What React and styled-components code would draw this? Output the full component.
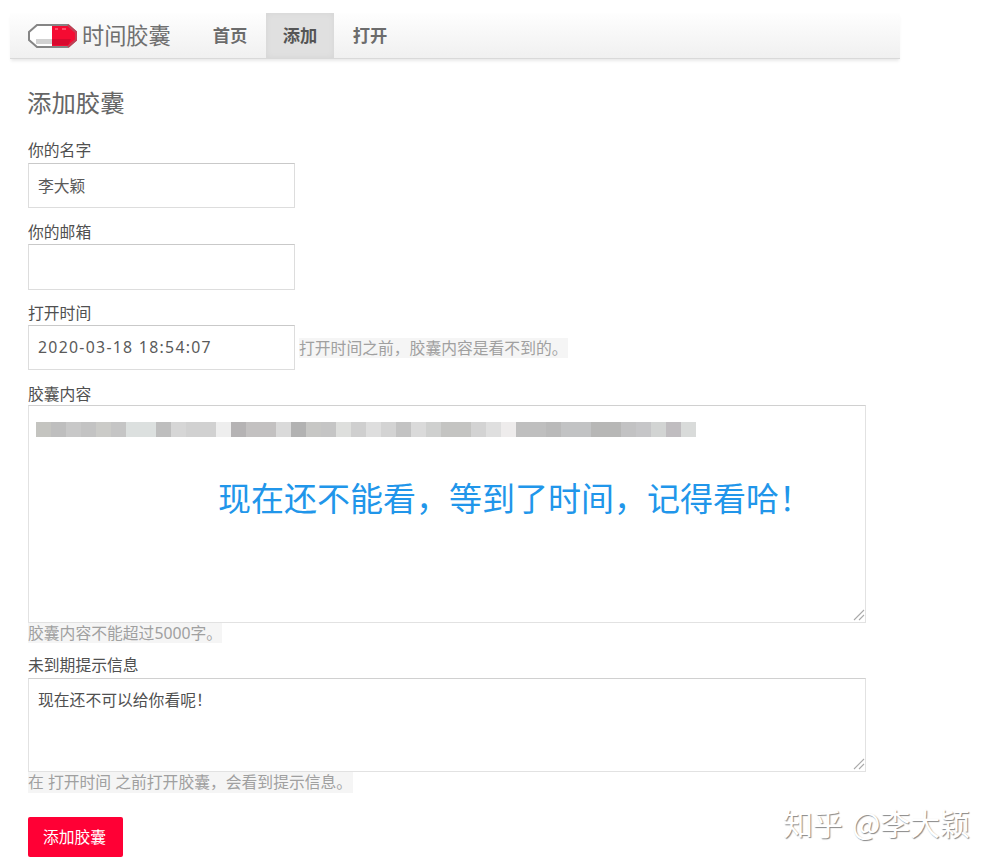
import React from "react";
import styled, { createGlobalStyle } from "styled-components";

const GlobalStyle = createGlobalStyle`
  * { box-sizing: border-box; }
  body {
    margin: 0;
    background: #fff;
    color: #555;
    font: 15.8px/20px "Noto Sans", "Noto Sans CJK SC", sans-serif;
  }
`;

const Page = styled.div`
  position: relative;
  width: 995px;
  height: 865px;
  padding: 13px 0 0 10px;
  overflow: hidden;
`;

const Navbar = styled.header`
  display: flex;
  width: 890px;
  height: 46px;
  padding-left: 17px;
  background: linear-gradient(#fefefe, #f0f0f0);
  border-bottom: 1px solid #d9d9d9;
  box-shadow: 0 3px 3px -1px rgba(0, 0, 0, 0.09);
`;

const Brand = styled.a`
  display: flex;
  align-items: center;
  gap: 4px;
  width: 167px;
  color: #707070;
  font: 22.2px/43px "Noto Sans CJK SC", sans-serif;
  white-space: nowrap;
`;

const BrandName = styled.span`
  margin: -2px 0 0 1px;
`;

const Capsule = styled.svg`
  flex: none;
  width: 50px;
  height: 26px;
  margin-top: 1px;
`;

const NavItem = styled.a`
  width: ${(p) => p.$width}px;
  height: 45px;
  color: ${(p) => (p.$active ? "#555" : "#6c6c6c")};
  background: ${(p) => (p.$active ? "#e0e0e0" : "transparent")};
  box-shadow: ${(p) => (p.$active ? "inset 0 0 6px rgba(0,0,0,.05)" : "none")};
  font: bold 17.3px/43px "Noto Sans CJK SC", sans-serif;
  text-align: center;
`;

const Form = styled.form`
  display: flex;
  flex-direction: column;
  align-items: flex-start;
  width: 838px;
  margin: 27px 0 0 18px;
`;

const Title = styled.h1`
  margin: 0 0 22px -1px;
  color: #666;
  font: 24.4px/32px "Noto Sans CJK SC", sans-serif;
`;

const Field = styled.div`
  height: ${(p) => p.$height}px;
  width: 100%;
`;

const Label = styled.label`
  display: block;
  height: ${(p) => p.$height || 22}px;
  color: #505050;
  line-height: 20px;
`;

const InputRow = styled.div`
  display: flex;
  align-items: center;
  gap: 4px;
`;

const Input = styled.input`
  width: 267px;
  height: ${(p) => p.$height || 46}px;
  padding: 0 9px 1px;
  border: 1px solid #ddd;
  border-top-color: #c9c9c9;
  outline: 0;
  color: #5a5a5a;
  font: inherit;
  letter-spacing: ${(p) => p.$tracking || "0"};
`;

const Hint = styled.span`
  display: block;
  width: ${(p) => p.$width}px;
  height: ${(p) => p.$height || 20}px;
  background: #f5f5f5;
  color: #a0a0a0;
  line-height: ${(p) => p.$height || 20}px;
  white-space: nowrap;
`;

const TextBox = styled.div`
  position: relative;
  width: 838px;
  height: ${(p) => p.$height}px;
  border: 1px solid #e2e2e2;
  border-top-color: #d0d0d0;
  padding: ${(p) => p.$padding};
  color: #505050;
`;

const Grip = styled.svg`
  position: absolute;
  right: 0;
  bottom: 1px;
  width: 12px;
  height: 12px;
  stroke: #aaa;
  stroke-width: 1.1;
`;

const Mosaic = styled.div`
  display: flex;
  height: 15px;
`;

const Tile = styled.i`
  width: 15px;
  background: ${(p) => p.$color};
`;

const Notice = styled.p`
  margin: 36px 0 0 182px;
  color: #2196ea;
  font: 33px/48px "Noto Sans CJK SC", sans-serif;
  white-space: nowrap;
`;

const Submit = styled.button`
  width: 95px;
  height: 40px;
  padding: 0 2px 0 0;
  border: 0;
  border-radius: 2px;
  background: #ff0035;
  color: #fff;
  font: 15.8px/40px "Noto Sans CJK SC", sans-serif;
`;

const Watermark = styled.div`
  position: absolute;
  left: 783px;
  top: 801px;
  color: #fff;
  font: 30px/42px "Noto Sans CJK SC", sans-serif;
  word-spacing: 3px;
  letter-spacing: -0.2px;
  text-shadow: 1px 1px 1px #888;
  white-space: nowrap;
`;

const tiles = (
  "c4c4c0 bebebe c8c8c8 c3c3c3 cbcbc8 c5c5c5 dce0df dce0df bebebe d6d6d6 d1d1d1 " +
  "d1d1d1 eeeeee b5b3b4 c3c1c1 c3c1c1 dadada b2b2b2 c7c7c5 c5c5c5 dedfdd cfcfcf " +
  "dedede d3d3d3 c3c3c3 dadada cfd0cf c4c4c2 c4c4c2 d3d3d3 dfdfdf eeecec bfbfbf " +
  "bfbfbf bababa c2c3c4 c2c3c4 b7b7b6 b7b7b6 c2c2c3 c6c6c8 d2d4d3 c0bdc0 d9dbda"
).split(" ");

const ResizeGrip = () => (
  <Grip viewBox="0 0 12 12">
    <path d="M1 11 11 1M6 11l5-5" />
  </Grip>
);

export default function App() {
  return (
    <>
      <GlobalStyle />
      <Page>
        <Navbar>
          <Brand>
            <Capsule viewBox="0 0 50 26">
              <path d="M10 2h31l8 7v8l-8 7H10l-8-7V9z" fill="#fff" />
              <path d="M25 2h16l8 7v8l-8 7H25z" fill="#f50b32" />
              <path d="M9 16h16v5H9z" fill="#d1d1d1" />
              <path d="M25 16h19l-3 6H25z" fill="#d8092e" />
              <path d="M28 6h3m4 0h4" stroke="#ff6880" strokeWidth="1.5" />
              <path d="M10 2h31l8 7v8l-8 7H10l-8-7V9z" fill="none" stroke="#858585" strokeWidth="2" />
              <path d="M41 2l8 7v8l-8 7" fill="none" stroke="#c43c52" strokeWidth="2" />
            </Capsule>
            <BrandName>时间胶囊</BrandName>
          </Brand>
          <NavItem $width={72}>首页</NavItem>
          <NavItem $width={68} $active>添加</NavItem>
          <NavItem $width={72}>打开</NavItem>
        </Navbar>
        <Form>
          <Title>添加胶囊</Title>
          <Field $height={82}>
            <Label $height={23}>你的名字</Label>
            <Input $height={45} defaultValue="李大颖" />
          </Field>
          <Field $height={81}>
            <Label>你的邮箱</Label>
            <Input />
          </Field>
          <Field $height={81}>
            <Label>打开时间</Label>
            <InputRow>
              <Input $height={45} defaultValue="2020-03-18 18:54:07" $tracking="1.3px" />
              <Hint $width={269}>打开时间之前，胶囊内容是看不到的。</Hint>
            </InputRow>
          </Field>
          <Field $height={271}>
            <Label $height={21}>胶囊内容</Label>
            <TextBox $height={218} $padding="16px 0 0 7px">
              <Mosaic>
                {tiles.map((color, i) => (
                  <Tile key={i} $color={"#" + color} />
                ))}
              </Mosaic>
              <Notice>现在还不能看，等到了时间，记得看哈！</Notice>
              <ResizeGrip />
            </TextBox>
            <Hint $width={194}>胶囊内容不能超过5000字。</Hint>
          </Field>
          <Field $height={162}>
            <Label $height={23}>未到期提示信息</Label>
            <TextBox $height={94} $padding="11px 9px">
              现在还不可以给你看呢！
              <ResizeGrip />
            </TextBox>
            <Hint $width={325} $height={21}>在 打开时间 之前打开胶囊，会看到提示信息。</Hint>
          </Field>
          <Submit type="button">添加胶囊</Submit>
        </Form>
        <Watermark>知乎 @李大颖</Watermark>
      </Page>
    </>
  );
}
